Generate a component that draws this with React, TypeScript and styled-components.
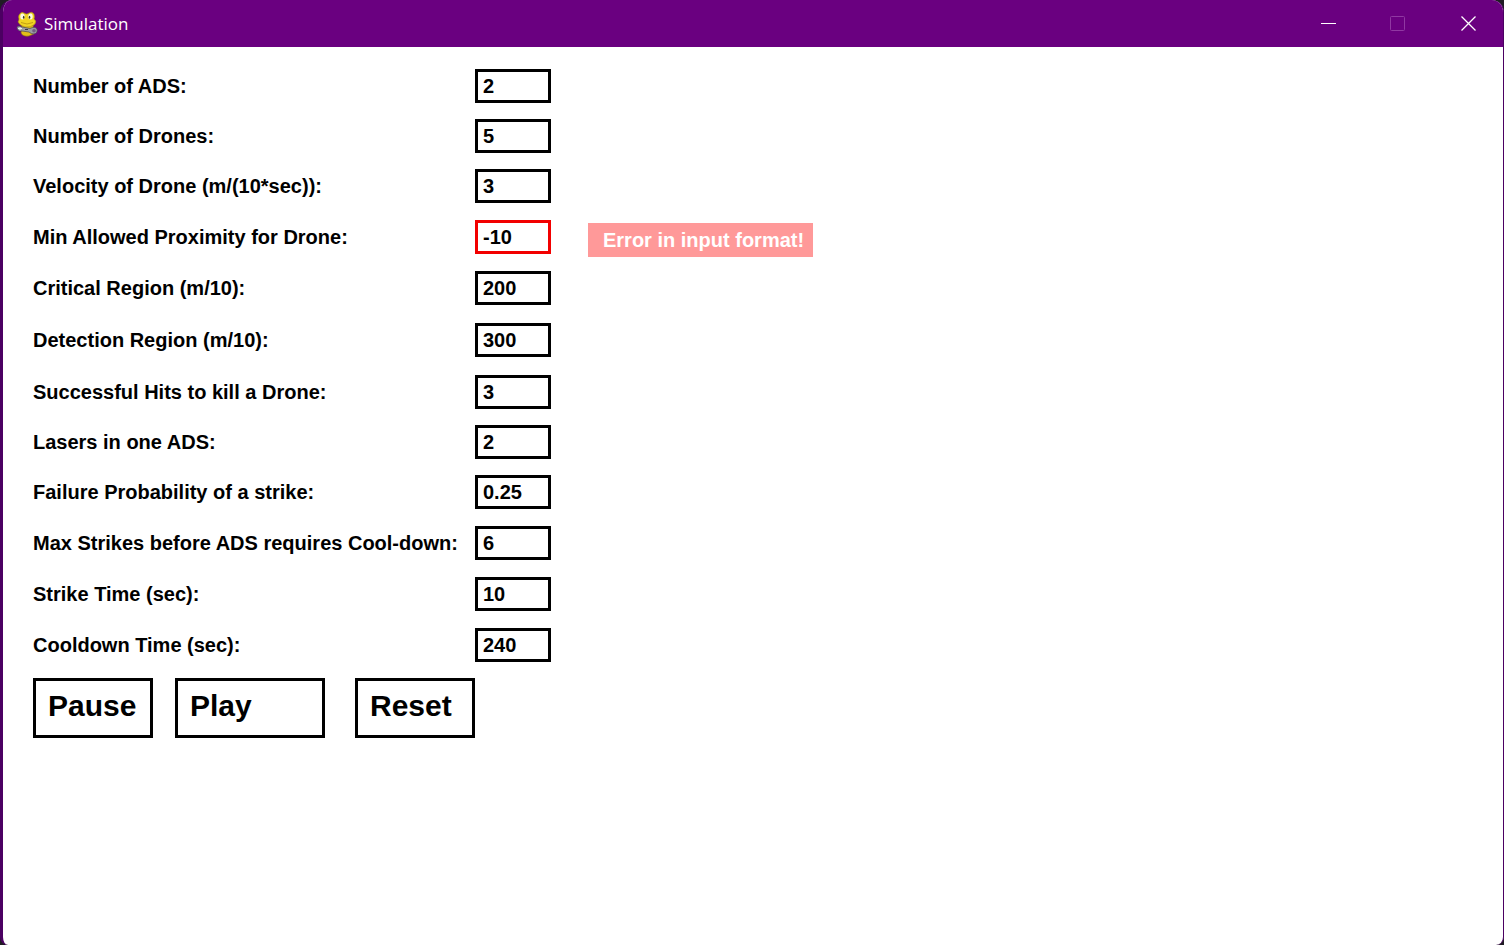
import React, { useState } from "react";
import styled, { createGlobalStyle } from "styled-components";

const GlobalStyle = createGlobalStyle`
  *, *::before, *::after { box-sizing: border-box; }
  body { margin: 0; background: #201c24; }
`;

const Frame = styled.div`
  position: relative;
  display: flex;
  flex-direction: column;
  min-height: 100vh;
  border-left: 3px solid #4b0062;
  border-right: 1px solid #4b0062;
  border-radius: 12px 12px 8px 8px;
  overflow: hidden;
  background: #ffffff;
  color: #000000;
  font-family: "Liberation Sans", Arial, sans-serif;
`;

const TitleBar = styled.header`
  display: flex;
  align-items: center;
  height: 47px;
  padding-left: 13px;
  background: #6a0080;
`;

const Title = styled.h1`
  flex: 1;
  margin: 0 0 0 5px;
  color: #ffffff;
  font: 400 17px/24px "Segoe UI", "Open Sans", "Noto Sans", sans-serif;
`;

const WindowButton = styled.button`
  display: flex;
  align-items: center;
  justify-content: center;
  width: 70px;
  height: 46px;
  padding: 0;
  border: 0;
  background: transparent;
  color: #ffffff;

  &:disabled { color: #9038a2; }
`;

const WindowControls = styled.div`
  display: flex;
  align-self: flex-start;
`;

const Panel = styled.main`
  flex: 1;
  padding: 22px 30px;
`;

const gaps = { tight: 16, regular: 17, loose: 18 };
type Gap = keyof typeof gaps;

const Row = styled.div<{ $gap: Gap }>`
  display: flex;
  align-items: center;
  margin-bottom: ${({ $gap }) => gaps[$gap]}px;
`;

const Label = styled.label`
  width: 442px;
  font-size: 20px;
  line-height: 34px;
  font-weight: 700;
  white-space: nowrap;
`;

const Control = styled.div`
  position: relative;
`;

const NumberBox = styled.input<{ $invalid: boolean }>`
  display: block;
  width: 76px;
  height: 34px;
  padding: 0 5px;
  border: 3px solid ${({ $invalid }) => ($invalid ? "#f20000" : "#000000")};
  border-radius: 0;
  outline: 0;
  background: #ffffff;
  color: #000000;
  font: 700 20px/28px "Liberation Sans", Arial, sans-serif;
`;

const ErrorTip = styled.span`
  position: absolute;
  top: 3px;
  left: calc(100% + 37px);
  width: 225px;
  padding-left: 15px;
  background: #ff9999;
  color: #ffffff;
  font-size: 20px;
  line-height: 34px;
  font-weight: 700;
  white-space: nowrap;
`;

const Actions = styled.div`
  display: flex;
`;

const ActionButton = styled.button<{ $wide?: boolean }>`
  width: ${({ $wide }) => ($wide ? 150 : 120)}px;
  height: 60px;
  margin-right: ${({ $wide }) => ($wide ? 30 : 22)}px;
  padding: 0 12px 4px;
  border: 3px solid #000000;
  border-radius: 0;
  background: #ffffff;
  color: #000000;
  font: 700 30px/40px "Liberation Sans", Arial, sans-serif;
  text-align: left;
`;

const EdgeMark = styled.i<{ $top: number }>`
  position: absolute;
  left: -3px;
  top: ${({ $top }) => $top}px;
  width: 1px;
  height: 3px;
  background: #b9a6c4;
`;

interface Field {
  id: string;
  label: string;
  value: string;
  gap: Gap;
}

const fields: Field[] = [
  { id: "ads", label: "Number of ADS:", value: "2", gap: "tight" },
  { id: "drones", label: "Number of Drones:", value: "5", gap: "tight" },
  { id: "velocity", label: "Velocity of Drone (m/(10*sec)):", value: "3", gap: "regular" },
  { id: "proximity", label: "Min Allowed Proximity for Drone:", value: "-10", gap: "regular" },
  { id: "critical", label: "Critical Region (m/10):", value: "200", gap: "loose" },
  { id: "detection", label: "Detection Region (m/10):", value: "300", gap: "loose" },
  { id: "hits", label: "Successful Hits to kill a Drone:", value: "3", gap: "tight" },
  { id: "lasers", label: "Lasers in one ADS:", value: "2", gap: "tight" },
  { id: "failure", label: "Failure Probability of a strike:", value: "0.25", gap: "regular" },
  { id: "strikes", label: "Max Strikes before ADS requires Cool-down:", value: "6", gap: "regular" },
  { id: "strikeTime", label: "Strike Time (sec):", value: "10", gap: "regular" },
  { id: "cooldown", label: "Cooldown Time (sec):", value: "240", gap: "tight" },
];

const isInvalid = (value: string) => !/^\d+(\.\d+)?$/.test(value);

function SnakeIcon() {
  return (
    <svg width="23" height="26" viewBox="0 0 23 26" aria-hidden="true">
      <path d="M6 14 L5 22 Q7 26 13 25 L18 23 L17 14Z" fill="#e3bd18" stroke="#7c6417" strokeWidth=".6" />
      <path d="M3 4 Q5 0 8 2 Q11 4 13 2 Q16 0 18 3 Q19 6 18 8 Q21 10 19 13 Q15 17 9 16 Q4 15 2 11 Q3 9 3 8 Q2 6 3 4Z" fill="#f0d422" stroke="#a0851a" strokeWidth=".6" />
      <ellipse cx="6.5" cy="5.5" rx="2.2" ry="3" fill="#fbfae8" />
      <ellipse cx="14.5" cy="5.5" rx="2.2" ry="3" fill="#fbfae8" />
      <ellipse cx="7.7" cy="6.3" rx=".8" ry="1.5" fill="#3c3720" />
      <ellipse cx="13.5" cy="6.3" rx=".8" ry="1.5" fill="#3c3720" />
      <path d="M5 11.5 Q11 14.5 17 11.5" fill="none" stroke="#b8920f" strokeWidth=".8" />
      <path d="M1 16.5 Q2 14 6 16 L14 17.5 Q19 15 21 18 Q22 22 18 23 Q15 23 13 21 L6 20 Q1 20 1 16.5Z" fill="#9b9ca3" stroke="#474653" strokeWidth=".7" />
      <path d="M2 17.5 H6 M4 16 V19.5" stroke="#e8eaeb" />
      <circle cx="18" cy="19.8" r="1.8" fill="#735c82" />
      <path d="M9 18.5 H12" stroke="#393644" />
    </svg>
  );
}

export default function App() {
  const [values, setValues] = useState<Record<string, string>>(
    Object.fromEntries(fields.map((field) => [field.id, field.value])),
  );

  return (
    <>
      <GlobalStyle />
      <Frame>
        <TitleBar>
          <SnakeIcon />
          <Title>Simulation</Title>
          <WindowControls>
            <WindowButton type="button" aria-label="Minimize">
              <svg width="16" height="16" viewBox="0 0 16 16"><path d="M1 8.5H16" stroke="currentColor" /></svg>
            </WindowButton>
            <WindowButton type="button" aria-label="Maximize" disabled>
              <svg width="16" height="16" viewBox="0 0 16 16"><rect x=".5" y="1.5" width="14" height="14" rx="1" fill="none" stroke="currentColor" /></svg>
            </WindowButton>
            <WindowButton type="button" aria-label="Close">
              <svg width="16" height="16" viewBox="0 0 16 16"><path d="M1.500 1.500L15.500 15.500M15.500 1.500L1.500 15.500" stroke="currentColor" strokeWidth="1.3" /></svg>
            </WindowButton>
          </WindowControls>
        </TitleBar>
        <Panel>
          {fields.map(({ id, label, gap }) => {
            const invalid = isInvalid(values[id]);
            return (
              <Row key={id} $gap={gap}>
                <Label htmlFor={id}>{label}</Label>
                <Control>
                  <NumberBox
                    id={id}
                    type="text"
                    value={values[id]}
                    $invalid={invalid}
                    aria-invalid={invalid}
                    onChange={(event) => setValues({ ...values, [id]: event.target.value })}
                  />
                  {invalid && <ErrorTip role="alert">Error in input format!</ErrorTip>}
                </Control>
              </Row>
            );
          })}
          <Actions>
            <ActionButton type="button">Pause</ActionButton>
            <ActionButton type="button" $wide>Play</ActionButton>
            <ActionButton type="button">Reset</ActionButton>
          </Actions>
        </Panel>
        <EdgeMark $top={61} />
        <EdgeMark $top={787} />
      </Frame>
    </>
  );
}
